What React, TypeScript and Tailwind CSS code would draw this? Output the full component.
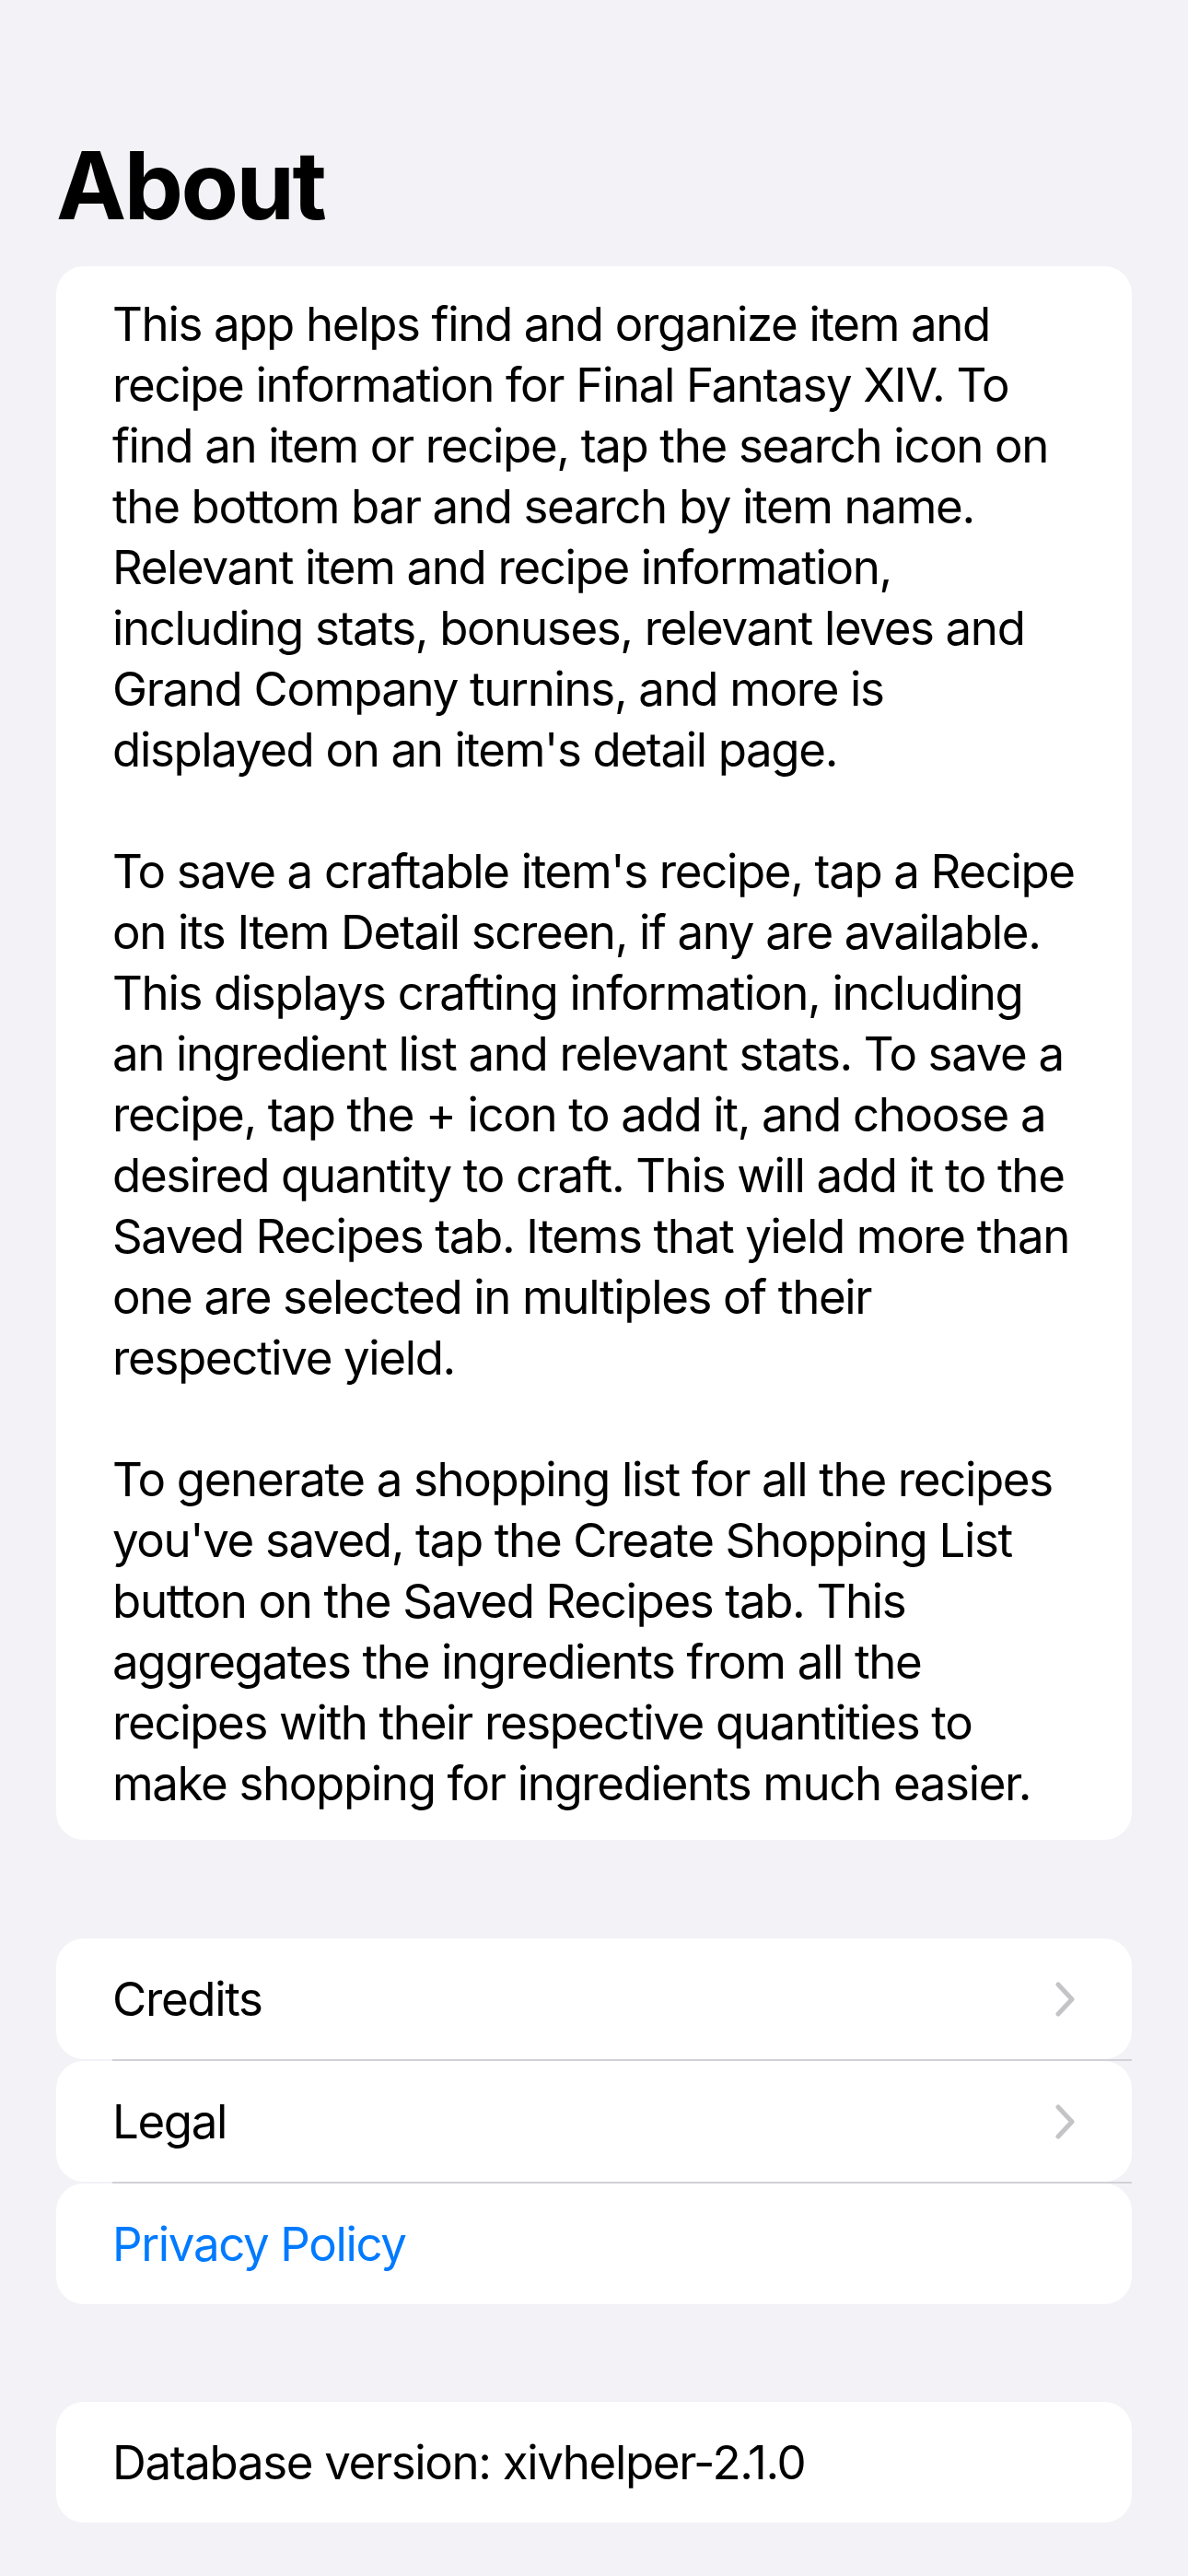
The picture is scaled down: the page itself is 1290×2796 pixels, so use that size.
import React from "react";

const para1 = [
  "This app helps find and organize item and",
  "recipe information for Final Fantasy XIV. To",
  "find an item or recipe, tap the search icon on",
  "the bottom bar and search by item name.",
  "Relevant item and recipe information,",
  "including stats, bonuses, relevant leves and",
  "Grand Company turnins, and more is",
  "displayed on an item's detail page.",
];
const para2 = [
  "To save a craftable item's recipe, tap a Recipe",
  "on its Item Detail screen, if any are available.",
  "This displays crafting information, including",
  "an ingredient list and relevant stats. To save a",
  "recipe, tap the + icon to add it, and choose a",
  "desired quantity to craft. This will add it to the",
  "Saved Recipes tab. Items that yield more than",
  "one are selected in multiples of their",
  "respective yield.",
];
const para3 = [
  "To generate a shopping list for all the recipes",
  "you've saved, tap the Create Shopping List",
  "button on the Saved Recipes tab. This",
  "aggregates the ingredients from all the",
  "recipes with their respective quantities to",
  "make shopping for ingredients much easier.",
];

function Chevron() {
  return (
    <svg width="24" height="38" viewBox="0 0 24 38" fill="none">
      <path d="M4 3 L19 19 L4 35" stroke="#c4c4c7" strokeWidth="5" strokeLinecap="round" strokeLinejoin="round" />
    </svg>
  );
}

function Row({ label, chevron, blue }: { label: string; chevron?: boolean; blue?: boolean }) {
  return (
    <div className="h-[131px] bg-white rounded-[30px] flex items-center justify-between pl-[61px] pr-[60px]">
      <span className={blue ? "text-[#007aff] whitespace-nowrap" : "text-black whitespace-nowrap"}>{label}</span>
      {chevron && <Chevron />}
    </div>
  );
}

function Sep() {
  return <div className="ml-[61px] h-[2px] bg-[#d1d1d6]" />;
}

export default function App() {
  return (
    <div
      className="min-h-[2796px] w-[1290px] bg-[#f2f2f7] text-black text-[51px] leading-[66px] tracking-[-1.35px]"
      style={{ fontFamily: "Inter, 'Noto Sans', sans-serif" }}
    >
      <div className="px-[61px] pt-[140px]">
        <h1 className="text-[102px] leading-[122px] font-bold tracking-[-2.5px] mb-[27px]">About</h1>
        <div className="bg-white rounded-[30px] pl-[61px] pr-[20px] pt-[30px] pb-[28px] whitespace-nowrap">
          {para1.map((l, i) => (
            <div key={"a" + i}>{l}</div>
          ))}
          <div className="h-[66px]" />
          {para2.map((l, i) => (
            <div key={"b" + i}>{l}</div>
          ))}
          <div className="h-[66px]" />
          {para3.map((l, i) => (
            <div key={"c" + i}>{l}</div>
          ))}
        </div>
        <div className="mt-[107px]">
          <Row label="Credits" chevron />
          <Sep />
          <Row label="Legal" chevron />
          <Sep />
          <Row label="Privacy Policy" blue />
        </div>
        <div className="mt-[106px]">
          <Row label="Database version: xivhelper-2.1.0" />
        </div>
      </div>
    </div>
  );
}
